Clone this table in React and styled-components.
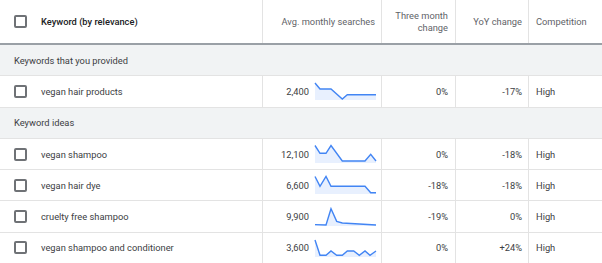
import React from 'react';
import styled, { createGlobalStyle } from 'styled-components';

const GlobalStyle = createGlobalStyle`
  body {
    margin: 0;
    background: #fff;
    font-family: Roboto, 'Liberation Sans', Arial, sans-serif;
  }
`;

const COLS = '263px 119px 74px 73px 73px';

const Table = styled.div`
  width: 602px;
  font-size: 9.3px;
  color: #3c4043;
`;

const HeaderRow = styled.div`
  display: grid;
  grid-template-columns: ${COLS};
  height: 45px;
  box-sizing: border-box;
  border-bottom: 2px solid #9aa0a6;
`;

const Row = styled.div`
  display: grid;
  grid-template-columns: ${COLS};
  height: 31.3px;
  box-sizing: border-box;
  border-bottom: 1px solid #e3e3e3;
`;

const GroupRow = styled.div`
  height: 31.3px;
  box-sizing: border-box;
  border-bottom: 1px solid #e3e3e3;
  background: #f1f3f4;
  display: flex;
  align-items: center;
  padding-left: 14px;
`;

const Cell = styled.div`
  display: flex;
  align-items: center;
  justify-content: ${(p) => (p.$left ? 'flex-start' : 'flex-end')};
  padding: ${(p) => (p.$left ? '0 0 0 7px' : `0 ${p.$pad ?? 7}px 0 0`)};
  border-right: ${(p) => (p.$last ? 'none' : '1px solid #e3e3e3')};
  text-align: ${(p) => (p.$left ? 'left' : 'right')};
`;

const KeywordCell = styled(Cell)`
  justify-content: flex-start;
  padding: 0 0 0 14px;
  gap: 14px;
`;

const SearchCell = styled(Cell)`
  gap: 6px;
  padding-right: 5px;
`;

const HeadLabel = styled.span`
  color: #5f6368;
  line-height: 11.5px;
`;

const HeadKeyword = styled.span`
  font-weight: 500;
  color: #202124;
`;

const Checkbox = styled.span`
  width: 13px;
  height: 13px;
  box-sizing: border-box;
  border: 2px solid #6f7276;
  border-radius: 2px;
  flex: none;
`;

const Spark = styled.svg`
  width: 61px;
  height: 18px;
  flex: none;
  overflow: visible;
`;

const Sparkline = ({ points }) => {
  const line = points.map(([x, y]) => `${x},${y}`).join(' ');
  const area = `0,18 ${line} 61,18`;
  return (
    <Spark viewBox="0 0 61 18">
      <polygon points={area} fill="#e8f0fe" />
      <polyline
        points={line}
        fill="none"
        stroke="#4285f4"
        strokeWidth="1.4"
        strokeLinejoin="miter"
      />
    </Spark>
  );
};

const provided = [
  {
    keyword: 'vegan hair products',
    searches: '2,400',
    trend: [[0, 1], [5, 7], [16, 7], [27.3, 17], [32.3, 12.7], [61, 12.7]],
    three: '0%',
    yoy: '-17%',
    comp: 'High',
  },
];

const ideas = [
  {
    keyword: 'vegan shampoo',
    searches: '12,100',
    trend: [[0, 0.5], [5, 8.3], [11, 8.3], [16, 0.5], [27.3, 16], [50, 16], [55.7, 9.3], [61, 16]],
    three: '0%',
    yoy: '-18%',
    comp: 'High',
  },
  {
    keyword: 'vegan hair dye',
    searches: '6,600',
    trend: [[0, 0.5], [5, 10.3], [11, 0.5], [16, 10.3], [50, 10.3], [55.7, 16.8], [61, 16.8]],
    three: '-18%',
    yoy: '-18%',
    comp: 'High',
  },
  {
    keyword: 'cruelty free shampoo',
    searches: '9,900',
    trend: [[0, 16.6], [11, 17], [16, 0.7], [21.7, 13.4], [27.3, 15], [40, 15.8], [61, 17]],
    three: '-19%',
    yoy: '0%',
    comp: 'High',
  },
  {
    keyword: 'vegan shampoo and conditioner',
    searches: '3,600',
    trend: [[0, 1], [5, 16.3], [11, 16.3], [16, 12], [21.7, 16.3], [27.3, 16.3], [32.3, 12], [38.7, 12], [44.3, 16.3], [50, 12], [55, 16.3], [61, 12]],
    three: '0%',
    yoy: '+24%',
    comp: 'High',
  },
];

const DataRow = ({ item }) => (
  <Row>
    <KeywordCell>
      <Checkbox />
      <span>{item.keyword}</span>
    </KeywordCell>
    <SearchCell>
      <span>{item.searches}</span>
      <Sparkline points={item.trend} />
    </SearchCell>
    <Cell>{item.three}</Cell>
    <Cell $pad={6}>{item.yoy}</Cell>
    <Cell $left $last>{item.comp}</Cell>
  </Row>
);

export default function App() {
  return (
    <>
      <GlobalStyle />
      <Table>
        <HeaderRow>
          <KeywordCell>
            <Checkbox />
            <HeadKeyword>Keyword (by relevance)</HeadKeyword>
          </KeywordCell>
          <Cell $pad={6}>
            <HeadLabel>Avg. monthly searches</HeadLabel>
          </Cell>
          <Cell>
            <HeadLabel>
              Three month
              <br />
              change
            </HeadLabel>
          </Cell>
          <Cell $pad={6}>
            <HeadLabel>YoY change</HeadLabel>
          </Cell>
          <Cell $left $last>
            <HeadLabel>Competition</HeadLabel>
          </Cell>
        </HeaderRow>
        <GroupRow>Keywords that you provided</GroupRow>
        {provided.map((item) => (
          <DataRow key={item.keyword} item={item} />
        ))}
        <GroupRow>Keyword ideas</GroupRow>
        {ideas.map((item) => (
          <DataRow key={item.keyword} item={item} />
        ))}
      </Table>
    </>
  );
}
